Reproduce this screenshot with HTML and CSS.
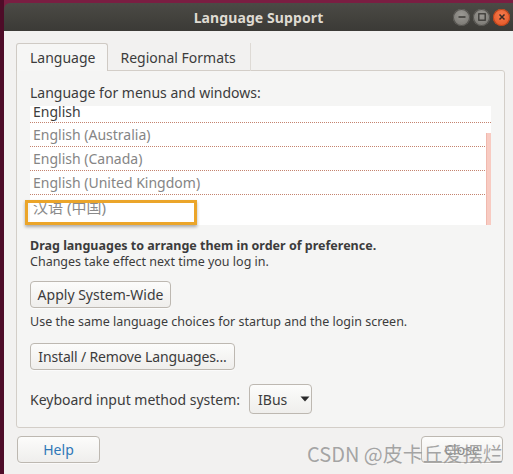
FILE: index.html
```html
<!DOCTYPE html>
<html lang="en">
<head>
<meta charset="utf-8">
<title>Language Support</title>
<link rel="stylesheet" href="styles.css">
</head>
<body>
<div class="desktop">
  <div class="window">
    <div class="titlebar">
      <span class="title">Language Support</span>
      <div class="wm-buttons">
        <span class="wm-btn wm-min"><svg width="10" height="10" viewBox="0 0 10 10"><path d="M1.5 5h7" stroke="#3a3935" stroke-width="1.6"/></svg></span>
        <span class="wm-btn wm-max"><svg width="10" height="10" viewBox="0 0 10 10"><rect x="1.8" y="1.8" width="6.4" height="6.4" fill="none" stroke="#3a3935" stroke-width="1.3"/></svg></span>
        <span class="wm-btn wm-close"><svg width="10" height="10" viewBox="0 0 10 10"><path d="M2.5 2.5l5 5M7.5 2.5l-5 5" stroke="#3a2a24" stroke-width="1.5"/></svg></span>
      </div>
    </div>
    <div class="content">
      <div class="tabs">
        <div class="tab active">Language</div>
        <div class="tab">Regional Formats</div>
      </div>
      <div class="panel">
        <div class="label">Language for menus and windows:</div>
        <div class="list-wrap">
          <div class="list">
            <div class="rows">
              <div class="row primary">English</div>
              <div class="row">English (Australia)</div>
              <div class="row">English (Canada)</div>
              <div class="row">English (United Kingdom)</div>
              <div class="row cjk">汉语 (中国)</div>
            </div>
            <div class="scrollbar"></div>
          </div>
          <div class="highlight"></div>
        </div>
        <p class="hint"><b>Drag languages to arrange them in order of preference.</b><br>Changes take effect next time you log in.</p>
        <div><button class="btn btn-apply">Apply System-Wide</button></div>
        <p class="note">Use the same language choices for startup and the login screen.</p>
        <div><button class="btn btn-install">Install / Remove Languages...</button></div>
        <div class="kbd-row">
          <span>Keyboard input method system:</span>
          <span class="combo">IBus <svg width="10" height="6" viewBox="0 0 10 6"><path d="M0.5 0.5h9L5 5.5z" fill="#2b2b2b"/></svg></span>
        </div>
      </div>
      <div class="actions">
        <button class="btn btn-help">Help</button>
        <button class="btn btn-close">Close</button>
      </div>
      <div class="watermark">CSDN @皮卡丘爱摆烂</div>
    </div>
  </div>
</div>
</body>
</html>
```

FILE: styles.css
```css
* { box-sizing: border-box; }
html, body { margin: 0; padding: 0; }
body {
  width: 513px;
  height: 474px;
  overflow: hidden;
  background: #6a1638;
  font-family: "Noto Sans", "Noto Sans CJK SC", sans-serif;
  color: #3c3c3c;
}
.desktop {
  padding: 3px 0 0 4px;
  height: 474px;
  background: linear-gradient(90deg, #4e0c28 0, #4e0c28 4px, #7a1e42 4px);
}
.window {
  width: 509px;
  height: 471px;
  display: flex;
  flex-direction: column;
  border-radius: 6px 0 0 0;
  overflow: hidden;
}
.titlebar {
  height: 28px;
  flex: none;
  display: grid;
  grid-template-columns: 1fr auto 1fr;
  align-items: center;
  background: linear-gradient(#4b4a45, #3b3a36);
}
.title {
  grid-column: 2;
  font-weight: bold;
  font-size: 14px;
  color: #dfdbd2;
  letter-spacing: 0.1px;
}
.wm-buttons {
  grid-column: 3;
  justify-self: end;
  display: flex;
  gap: 3px;
  padding-right: 3px;
}
.wm-btn {
  width: 17px;
  height: 17px;
  border-radius: 50%;
  display: flex;
  align-items: center;
  justify-content: center;
  background: radial-gradient(circle at 50% 35%, #9a9893, #73716c);
  box-shadow: inset 0 0 0 1px #55534f;
}
.wm-close {
  background: radial-gradient(circle at 50% 35%, #f47a4c, #e2501f);
  box-shadow: inset 0 0 0 1px #b9441c;
}
.content {
  flex: 1;
  position: relative;
  background: #f2f1f0;
  padding: 12px 8px 0 12px;
}
.tabs {
  display: flex;
  height: 28px;
  position: relative;
  z-index: 1;
}
.tab {
  height: 28px;
  padding: 0 14px 0 12px;
  display: flex;
  align-items: center;
  font-size: 14px;
  color: #3c3c3c;
  border-right: 1px solid #dedad5;
}
.tab.active {
  background: #f6f6f5;
  border: 1px solid #cfcac4;
  border-bottom: none;
  border-radius: 3px 3px 0 0;
  height: 28px;
  padding: 0 12px 0 13px;
}
.panel {
  margin-top: -1px;
  border: 1px solid #d3cec8;
  border-radius: 0 3px 3px 3px;
  background: #f5f5f4;
  padding: 13px 13px 12px 13px;
  height: 358px;
}
.label {
  font-size: 14px;
  line-height: 17px;
  margin-bottom: 5px;
}
.list-wrap {
  position: relative;
}
.list {
  position: relative;
  height: 119px;
  width: 461px;
  background: #ffffff;
  overflow: hidden;
}
.rows { margin-top: -7px; }
.row {
  height: 24px;
  padding-left: 3px;
  font-size: 14px;
  line-height: 24px;
  color: #858585;
  border-bottom: 1px dotted #c4836f;
}
.row.primary { color: #3c3c3c; line-height: 26px; }
.row.cjk {
  border-bottom: none;
  font-size: 15px;
  line-height: 25px;
  color: #8a8a8a;
}
.scrollbar {
  position: absolute;
  right: 0;
  top: 27px;
  bottom: 0;
  width: 5px;
  background: #f8cbc2;
  border-left: 1px solid #f1b9ae;
}
.highlight {
  position: absolute;
  left: -5px;
  top: 94px;
  width: 172px;
  height: 25px;
  border: 3px solid #eba52a;
  box-shadow: 0 2px 3px rgba(0, 0, 0, 0.3);
}
.hint {
  margin: 13px 0 0;
  font-size: 12.5px;
  line-height: 16px;
}
.hint b { font-weight: bold; }
.note {
  margin: 6px 0 0;
  font-size: 12.5px;
  line-height: 16px;
}
.btn {
  font-family: inherit;
  font-size: 14px;
  color: #3c3c3c;
  height: 27px;
  padding: 0 6px;
  white-space: nowrap;
  border: 1px solid #bdb8b1;
  border-radius: 4px;
  background: linear-gradient(#fcfcfb, #efeeec);
  box-shadow: 0 1px 0 rgba(255,255,255,0.6);
}
.btn-apply { margin-top: 11px; width: 141px; }
.btn-install {
  margin-top: 13px;
  min-width: 205px;
  padding: 0 5px;
  letter-spacing: -0.15px;
}
.kbd-row {
  margin-top: 14px;
  display: flex;
  align-items: center;
  gap: 9px;
  font-size: 14px;
}
.combo {
  width: 63px;
  height: 30px;
  display: flex;
  align-items: center;
  gap: 13px;
  padding-left: 8px;
  border: 1px solid #bdb8b1;
  border-radius: 4px;
  background: linear-gradient(#fcfcfb, #efeeec);
}
.actions {
  display: flex;
  justify-content: space-between;
  margin-top: 8px;
  padding: 0 2px 0 1px;
}
.btn-help {
  width: 83px;
  height: 27px;
  color: #2f78b8;
}
.btn-close {
  width: 82px;
  height: 27px;
  color: #8a8a8a;
}
.watermark {
  position: absolute;
  left: 303px;
  top: 410px;
  font-family: "Noto Sans CJK SC", sans-serif;
  font-size: 20px;
  line-height: 26px;
  color: rgba(150, 150, 150, 0.85);
  white-space: nowrap;
}
```
